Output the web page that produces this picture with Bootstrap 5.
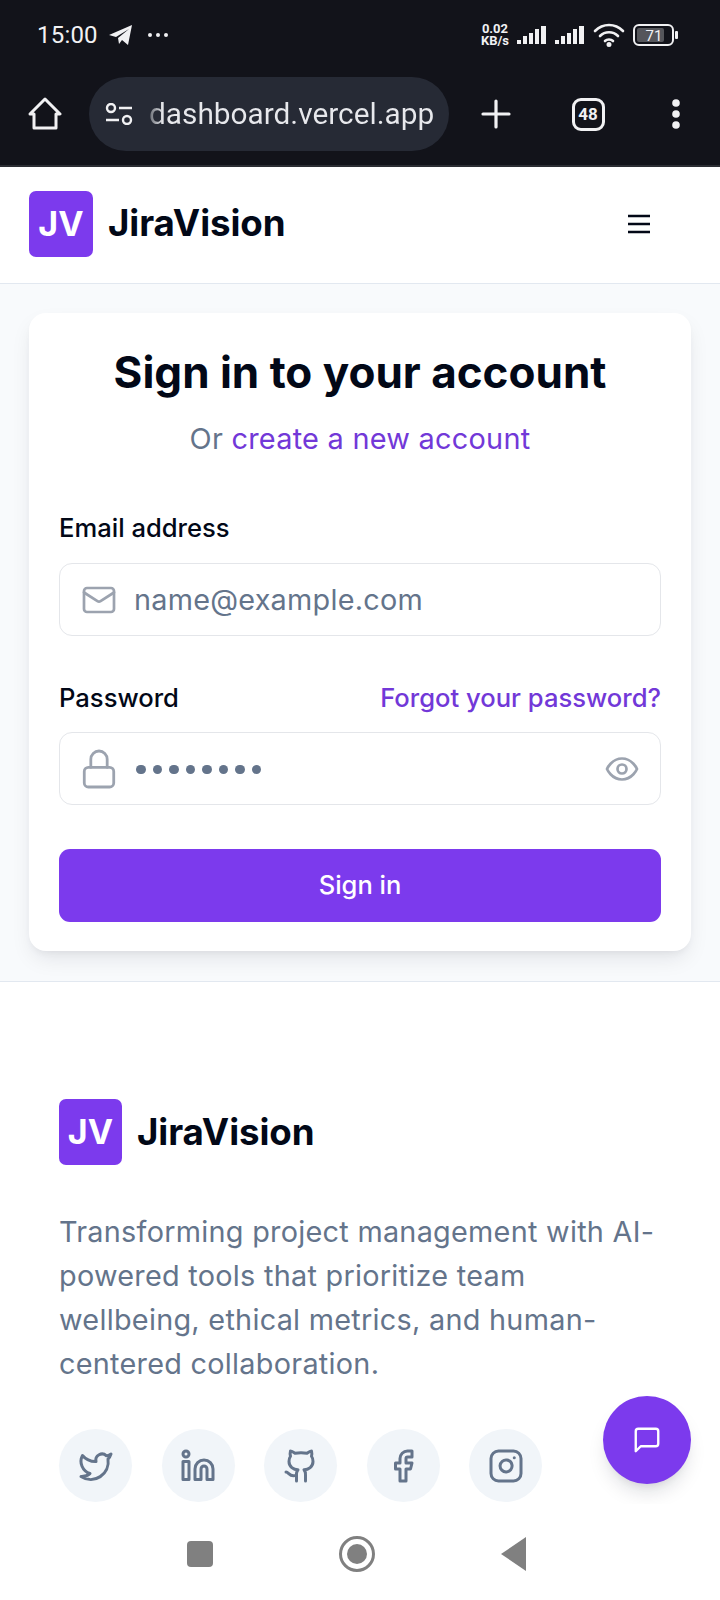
<!DOCTYPE html>
<html lang="en">
<head>
<meta charset="utf-8">
<title>JiraVision</title>
<link href="https://cdn.jsdelivr.net/npm/bootstrap@5.3.0/dist/css/bootstrap.min.css" rel="stylesheet">
<style>
html,body{height:1600px;overflow:hidden}
body{font-family:Inter,"Liberation Sans",sans-serif;background:#fff;color:#020817;position:relative}
.chrome-top{background:#12131a;height:167px;border-bottom:2px solid #2b2d33;color:#f1f1f3}
.status-row{height:70px;padding:0 41px 0 37px;font-family:Roboto,sans-serif}
.clock{font-size:24px;line-height:1;font-weight:400;letter-spacing:.2px}
.plane{margin-left:11px}
.more-dots{margin-left:14px}
.speed{font-size:13px;line-height:12px;font-weight:700;text-align:center;font-family:Roboto,sans-serif}
.tool-row{height:74px;padding:7px 39px 0 28px}
.home-slot,.tools-slot{height:74px}
.tools-slot{padding-left:32px}
.url-pill{width:360px;height:74px;background:#262a35;border-radius:37px;margin-left:27px;padding-left:16px;flex:none}
.url-text{font-family:Roboto,sans-serif;font-size:29.8px;color:#e7e8ec;margin-left:15px;white-space:nowrap;line-height:1.2;background:linear-gradient(90deg,#666a72 0,#e7e8ec 14px);-webkit-background-clip:text;background-clip:text;-webkit-text-fill-color:transparent}
.tab-count{width:33px;height:33px;border:3px solid #f1f1f3;border-radius:9px;font:700 17px/1 Roboto,sans-serif;margin-right:6px}
.site-nav{height:117px;background:#fff;border-bottom:1px solid #e2e8f0;padding:0 69px 3px 29px}
.logo-box{width:64px;height:66px;background:#7c3aed;color:#fff;border-radius:7px;font-weight:700;font-size:34px;line-height:1;flex:none}
.logo-name{font-weight:700;font-size:36.7px;line-height:1;color:#020817;margin-left:15px;letter-spacing:-.1px}
.foot-brand .logo-box{width:63px}
.page-main{background:#f8fafc;height:698px;padding:29px 29px 0 29px;border-bottom:1px solid #e2e8f0}
.auth-card{height:638px;background:#fff;border:0;border-radius:17px;box-shadow:0 10px 22px -4px rgba(15,23,42,.1),0 4px 8px -4px rgba(15,23,42,.08);padding:30px 30px 0}
.auth-title{font-size:44px;font-weight:700;line-height:58px;color:#020817;margin:0;text-align:center}
.auth-sub{font-size:28.9px;line-height:38px;color:#64748b;text-align:center;margin:19px 0 0;letter-spacing:.25px}
.field-label{font-size:25.6px;line-height:36px;color:#020817;margin:0;font-weight:500}
.violet{color:#7238d8;text-decoration:none}
.field-gap-a{margin-top:52px}
.field-gap-b{margin-top:44px}
.field-box{height:73px;border:1px solid #e4e6ea;border-radius:13px;margin-top:17px;padding:0 20px 0 21px;background:#fff}
.field-box.pw-box{margin-top:16px}
.field-ph{font-size:28.8px;color:#64748b;margin-left:17px;line-height:1;letter-spacing:.25px;padding-top:1px}
.dots{margin-left:19px;gap:7px;padding-top:2px}
.dots i{display:block;width:9.5px;height:9.5px;border-radius:50%;background:#64748b}
.submit-btn{height:73px;width:100%;background:#7c3aed;border:0;border-radius:11px;color:#fff;font-size:25.5px;font-weight:500;margin-top:44px}
.site-foot{padding:117px 59px 0 59px;background:#fff}
.foot-text{font-size:28.8px;line-height:44px;color:#64748b;margin:45px 0 0;letter-spacing:.28px}
.social-row{gap:29.5px;margin-top:43px}
.social{width:73px;height:73px;border-radius:50%;background:#f1f5f9;flex:none}
.fab-chat{position:absolute;left:603px;top:1396px;width:88px;height:88px;border-radius:50%;background:#7c3aed;box-shadow:0 12px 20px -5px rgba(15,23,42,.15),0 6px 10px -6px rgba(15,23,42,.1);border:0}
.android-nav{position:absolute;left:0;right:0;top:1504px;height:96px;background:#fff}
.nav-ic{position:absolute}
.nav-square{left:186px;top:34px}
.nav-ring{left:338px;top:31px}
.nav-back{left:500px;top:33px}
</style>
</head>
<body>
<header class="chrome-top">
  <div class="status-row d-flex align-items-center justify-content-between">
    <div class="d-flex align-items-center">
      <span class="clock">15:00</span>
      <svg width="24" height="22" viewBox="0 0 24 22" class="plane" fill="#f1f1f3"><path d="M0 11 23 1l-4 20-6-5-3 4-1-6 11-9-13 8z"/></svg>
      <svg width="22" height="6" viewBox="0 0 22 6" class="more-dots" fill="#f1f1f3"><circle cx="3" cy="3" r="2"/><circle cx="11" cy="3" r="2"/><circle cx="19" cy="3" r="2"/></svg>
    </div>
    <div class="d-flex align-items-center">
      <div class="speed">0.02<br>KB/s</div>
      <svg width="30" height="20" viewBox="0 0 30 20" class="ms-2" fill="#f1f1f3"><rect x="0" y="15" width="4" height="4"/><rect x="6" y="11" width="4" height="8"/><rect x="12" y="8" width="4" height="11"/><rect x="18" y="4" width="4" height="15"/><rect x="24" y="1" width="5" height="18"/></svg>
      <svg width="30" height="20" viewBox="0 0 30 20" class="ms-2" fill="#f1f1f3"><rect x="0" y="15" width="4" height="4"/><rect x="6" y="11" width="4" height="8"/><rect x="12" y="8" width="4" height="11"/><rect x="18" y="4" width="4" height="15"/><rect x="24" y="1" width="5" height="18"/></svg>
      <svg width="32" height="24" viewBox="0 0 32 24" class="ms-2" fill="none" stroke="#f1f1f3" stroke-width="2.6" stroke-linecap="round"><path d="M2 8c8-8 20-8 28 0"/><path d="M7 13c5-5 13-5 18 0"/><path d="M12 18c2-2 6-2 8 0"/><circle cx="16" cy="21.5" r="1.2" fill="#f1f1f3"/></svg>
      <svg width="46" height="22" viewBox="0 0 46 22" class="ms-2"><rect x="1" y="1" width="39" height="20" rx="5" fill="none" stroke="#f1f1f3" stroke-width="2"/><rect x="4" y="4" width="27" height="14" rx="2" fill="#55565b"/><text x="21" y="17" font-family="Roboto,sans-serif" font-size="15" fill="#f1f1f3" text-anchor="middle">71</text><rect x="42" y="7" width="3" height="8" rx="1" fill="#f1f1f3"/></svg>
    </div>
  </div>
  <div class="tool-row d-flex align-items-start">
    <div class="home-slot d-flex align-items-center">
      <svg width="34" height="34" viewBox="0 0 34 34" fill="none" stroke="#f1f1f3" stroke-width="3" stroke-linejoin="round"><path d="M2 17 17 2l15 15h-4v14H6V17z"/></svg>
    </div>
    <div class="url-pill d-flex align-items-center">
      <svg width="29" height="22" viewBox="0 0 29 22" fill="none" stroke="#f1f1f3" stroke-width="2.4"><circle cx="6" cy="5" r="4"/><path d="M14 5h13M1 17h13"/><circle cx="22" cy="17" r="4"/></svg>
      <span class="url-text">dashboard.vercel.app</span>
    </div>
    <div class="tools-slot d-flex align-items-center flex-grow-1 justify-content-between">
      <svg width="30" height="30" viewBox="0 0 30 30" stroke="#f1f1f3" stroke-width="3.2" stroke-linecap="round"><path d="M15 2v26M2 15h26"/></svg>
      <span class="tab-count d-flex align-items-center justify-content-center">48</span>
      <svg width="10" height="32" viewBox="0 0 10 32" fill="#f1f1f3"><circle cx="5" cy="5" r="3.8"/><circle cx="5" cy="16" r="3.8"/><circle cx="5" cy="27" r="3.8"/></svg>
    </div>
  </div>
</header>

<nav class="site-nav d-flex align-items-center justify-content-between">
  <a class="d-flex align-items-center text-decoration-none" href="#">
    <span class="logo-box d-flex align-items-center justify-content-center">JV</span>
    <span class="logo-name">JiraVision</span>
  </a>
  <svg width="24" height="20" viewBox="0 0 24 20" stroke="#020817" stroke-width="2.4"><path d="M1 2h22M1 10h22M1 18h22"/></svg>
</nav>

<main class="page-main">
  <section class="card auth-card">
    <h1 class="auth-title">Sign in to your account</h1>
    <p class="auth-sub">Or <a href="#" class="violet">create a new account</a></p>
    <form>
      <p class="field-label field-gap-a">Email address</p>
      <div class="field-box d-flex align-items-center">
        <svg width="36" height="36" viewBox="0 0 24 24" fill="none" stroke="#9ca3af" stroke-width="1.8" stroke-linecap="round" stroke-linejoin="round"><rect x="2" y="4" width="20" height="16" rx="2"/><path d="m22 7-8.97 5.7a1.94 1.94 0 0 1-2.06 0L2 7"/></svg>
        <span class="field-ph">name@example.com</span>
      </div>
      <div class="d-flex justify-content-between field-gap-b">
        <span class="field-label">Password</span>
        <a href="#" class="field-label violet">Forgot your password?</a>
      </div>
      <div class="field-box pw-box d-flex align-items-center">
        <svg width="36" height="44" viewBox="0 0 22 26" fill="none" stroke="#9ca3af" stroke-width="1.7" stroke-linecap="round" stroke-linejoin="round"><rect x="2" y="12" width="18" height="12" rx="2.5"/><path d="M6 12V7a5 5 0 0 1 10 0v5"/></svg>
        <span class="dots d-flex"><i></i><i></i><i></i><i></i><i></i><i></i><i></i><i></i></span>
        <svg class="ms-auto" width="36" height="36" viewBox="0 0 24 24" fill="none" stroke="#9ca3af" stroke-width="1.8" stroke-linecap="round" stroke-linejoin="round"><path d="M2 12s3-7 10-7 10 7 10 7-3 7-10 7-10-7-10-7Z"/><circle cx="12" cy="12" r="3"/></svg>
      </div>
      <button type="button" class="btn submit-btn">Sign in</button>
    </form>
  </section>
</main>

<footer class="site-foot">
  <a class="foot-brand d-flex align-items-center text-decoration-none" href="#">
    <span class="logo-box d-flex align-items-center justify-content-center">JV</span>
    <span class="logo-name">JiraVision</span>
  </a>
  <p class="foot-text">Transforming project management with AI-powered tools that prioritize team wellbeing, ethical metrics, and human-centered collaboration.</p>
  <div class="d-flex social-row">
    <a href="#" class="social d-flex align-items-center justify-content-center"><svg width="36" height="36" viewBox="0 0 24 24" fill="none" stroke="#64748b" stroke-width="2" stroke-linecap="round" stroke-linejoin="round"><path d="M22 4s-.7 2.1-2 3.4c1.6 10-9.4 17.3-18 11.6 2.2.1 4.4-.6 6-2C3 15.5.5 9.6 3 5c2.2 2.6 5.6 4.1 9 4-.9-4.2 4-6.6 7-3.8 1.1 0 3-1.2 3-1.2z"/></svg></a>
    <a href="#" class="social d-flex align-items-center justify-content-center"><svg width="36" height="36" viewBox="0 0 24 24" fill="none" stroke="#64748b" stroke-width="2" stroke-linecap="round" stroke-linejoin="round"><path d="M16 8a6 6 0 0 1 6 6v7h-4v-7a2 2 0 0 0-2-2 2 2 0 0 0-2 2v7h-4v-7a6 6 0 0 1 6-6z"/><rect x="2" y="9" width="4" height="12"/><circle cx="4" cy="4" r="2"/></svg></a>
    <a href="#" class="social d-flex align-items-center justify-content-center"><svg width="36" height="36" viewBox="0 0 24 24" fill="none" stroke="#64748b" stroke-width="2" stroke-linecap="round" stroke-linejoin="round"><path d="M15 22v-4a4.8 4.8 0 0 0-1-3.5c3 0 6-2 6-5.5.08-1.25-.27-2.48-1-3.5.28-1.15.28-2.35 0-3.5 0 0-1 0-3 1.5-2.64-.5-5.36-.5-8 0C6 2 5 2 5 2c-.3 1.15-.3 2.35 0 3.5A5.403 5.403 0 0 0 4 9c0 3.5 3 5.5 6 5.5-.39.49-.68 1.05-.85 1.65-.17.6-.22 1.23-.15 1.85v4"/><path d="M9 18c-4.51 2-5-2-7-2"/></svg></a>
    <a href="#" class="social d-flex align-items-center justify-content-center"><svg width="36" height="36" viewBox="0 0 24 24" fill="none" stroke="#64748b" stroke-width="2" stroke-linecap="round" stroke-linejoin="round"><path d="M18 2h-3a5 5 0 0 0-5 5v3H7v4h3v8h4v-8h3l1-4h-4V7a1 1 0 0 1 1-1h3z"/></svg></a>
    <a href="#" class="social d-flex align-items-center justify-content-center"><svg width="36" height="36" viewBox="0 0 24 24" fill="none" stroke="#64748b" stroke-width="2" stroke-linecap="round" stroke-linejoin="round"><rect x="2" y="2" width="20" height="20" rx="5"/><path d="M16 11.37A4 4 0 1 1 12.63 8 4 4 0 0 1 16 11.37z"/><path d="M17.5 6.5h.01"/></svg></a>
  </div>
</footer>

<button class="btn p-0 fab-chat d-flex align-items-center justify-content-center" type="button" aria-label="Chat"><svg width="30" height="30" viewBox="0 0 24 24" fill="none" stroke="#fff" stroke-width="1.9" stroke-linecap="round" stroke-linejoin="round"><path d="M21 15a2 2 0 0 1-2 2H7l-4 4V5a2 2 0 0 1 2-2h14a2 2 0 0 1 2 2z"/></svg></button>

<div class="android-nav">
  <svg class="nav-ic nav-square" width="28" height="36" viewBox="0 0 28 36" fill="#808080"><rect x="1" y="3" width="26" height="26" rx="4"/></svg>
  <svg class="nav-ic nav-ring" width="38" height="38" viewBox="0 0 38 38"><circle cx="19" cy="19" r="16.5" fill="none" stroke="#808080" stroke-width="3"/><circle cx="19" cy="19" r="10" fill="#808080"/></svg>
  <svg class="nav-ic nav-back" width="28" height="34" viewBox="0 0 28 34" fill="#808080"><path d="M26 0v34L1 17z"/></svg>
</div>
<script src="https://cdn.jsdelivr.net/npm/bootstrap@5.3.0/dist/js/bootstrap.bundle.min.js"></script>
</body>
</html>
